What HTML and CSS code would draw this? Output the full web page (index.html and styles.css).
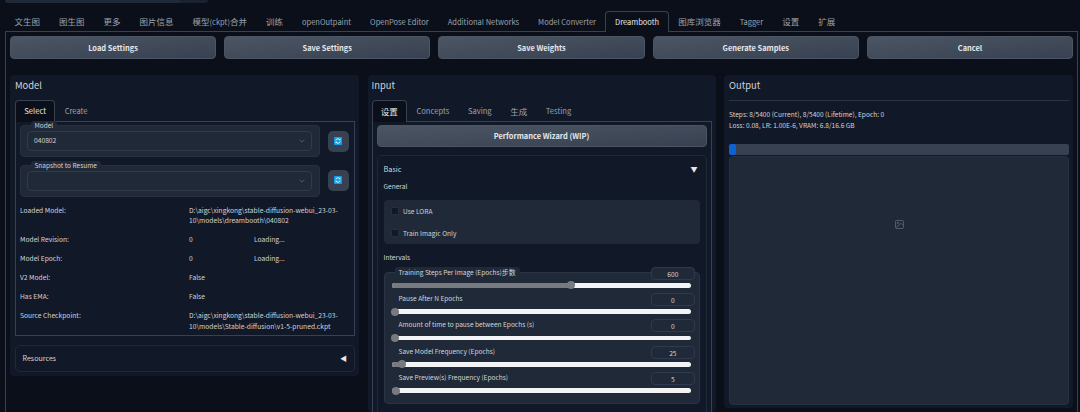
FILE: index.html
```html
<!DOCTYPE html>
<html lang="zh">
<head>
<meta charset="utf-8">
<title>Dreambooth</title>
<link rel="stylesheet" href="styles.css">
</head>
<body>
<div class="remnant"><div class="remnant-main"></div></div>
<nav class="tabs">
  <span class="tab cjk">文生图</span><span class="tab cjk">图生图</span><span class="tab cjk">更多</span><span class="tab cjk">图片信息</span><span class="tab"><span class="cjk">模型</span>(ckpt)<span class="cjk">合并</span></span><span class="tab cjk">训练</span><span class="tab">openOutpaint</span><span class="tab">OpenPose Editor</span><span class="tab">Additional Networks</span><span class="tab">Model Converter</span><span class="tab active">Dreambooth</span><span class="tab cjk">图库浏览器</span><span class="tab">Tagger</span><span class="tab cjk">设置</span><span class="tab cjk">扩展</span>
</nav>
<main class="content">
  <div class="actions">
    <button class="btn">Load Settings</button>
    <button class="btn">Save Settings</button>
    <button class="btn">Save Weights</button>
    <button class="btn">Generate Samples</button>
    <button class="btn">Cancel</button>
  </div>
  <div class="columns">
    <section class="panel">
      <h2 class="panel-title">Model</h2>
      <div class="subtabs">
        <span class="subtab active">Select</span><span class="subtab">Create</span>
      </div>
      <div class="subpanel">
        <div class="pick-row">
          <div class="group">
            <span class="legend">Model</span>
            <div class="select"><span>040802</span><svg class="chev" viewBox="0 0 10 6"><path d="M1 1l4 4 4-4"/></svg></div>
          </div>
          <button class="refresh"><svg viewBox="0 0 8 8"><rect width="8" height="8" rx=".8" fill="#129ee6"/><path d="M1.8 3.4A2.3 2.3 0 0 1 5.8 2.6M6.2 4.6A2.3 2.3 0 0 1 2.2 5.4" fill="none" stroke="#fff" stroke-width=".9"/><path d="M6.4 1.4v1.9H4.6zM1.6 6.6V4.7h1.8z" fill="#fff"/></svg></button>
        </div>
        <div class="pick-row second">
          <div class="group">
            <span class="legend">Snapshot to Resume</span>
            <div class="select"><span></span><svg class="chev" viewBox="0 0 10 6"><path d="M1 1l4 4 4-4"/></svg></div>
          </div>
          <button class="refresh"><svg viewBox="0 0 8 8"><rect width="8" height="8" rx=".8" fill="#129ee6"/><path d="M1.8 3.4A2.3 2.3 0 0 1 5.8 2.6M6.2 4.6A2.3 2.3 0 0 1 2.2 5.4" fill="none" stroke="#fff" stroke-width=".9"/><path d="M6.4 1.4v1.9H4.6zM1.6 6.6V4.7h1.8z" fill="#fff"/></svg></button>
        </div>
        <div class="info">
          <span>Loaded Model:</span><span class="wide">D:\aigc\xingkong\stable-diffusion-webui_23-03-<br>10\models\dreambooth\040802</span>
          <span>Model Revision:</span><span>0</span><span>Loading...</span>
          <span>Model Epoch:</span><span>0</span><span>Loading...</span>
          <span>V2 Model:</span><span class="wide">False</span>
          <span>Has EMA:</span><span class="wide">False</span>
          <span>Source Checkpoint:</span><span class="wide">D:\aigc\xingkong\stable-diffusion-webui_23-03-<br>10\models\Stable-diffusion\v1-5-pruned.ckpt</span>
        </div>
      </div>
      <div class="accordion"><span>Resources</span><span class="tri">◀</span></div>
    </section>

    <section class="panel panel-input">
      <h2 class="panel-title">Input</h2>
      <div class="subtabs">
        <span class="subtab active cjk">设置</span><span class="subtab">Concepts</span><span class="subtab">Saving</span><span class="subtab cjk">生成</span><span class="subtab">Testing</span>
      </div>
      <div class="subpanel input-body">
        <button class="btn wizard">Performance Wizard (WIP)</button>
        <div class="basic">
          <div class="basic-head"><span>Basic</span><span class="tri">▼</span></div>
          <div class="heading general">General</div>
          <div class="checks">
            <label class="check"><i class="box"></i>Use LORA</label>
            <label class="check"><i class="box"></i>Train Imagic Only</label>
          </div>
          <div class="heading intervals">Intervals</div>
          <div class="sliders">
            <div class="slider">
              <div class="slider-top"><span class="pill">Training Steps Per Image (Epochs)<span class="pill-cjk">步数</span></span><span class="num">600</span></div>
              <div class="track"><div class="fill" style="width:60%"></div></div>
            </div>
            <div class="slider">
              <div class="slider-top"><span class="pill">Pause After N Epochs</span><span class="num">0</span></div>
              <div class="track"><div class="fill" style="width:1.2%"></div></div>
            </div>
            <div class="slider">
              <div class="slider-top"><span class="pill">Amount of time to pause between Epochs (s)</span><span class="num">0</span></div>
              <div class="track"><div class="fill" style="width:1.2%"></div></div>
            </div>
            <div class="slider">
              <div class="slider-top"><span class="pill">Save Model Frequency (Epochs)</span><span class="num">25</span></div>
              <div class="track"><div class="fill" style="width:3.6%"></div></div>
            </div>
            <div class="slider">
              <div class="slider-top"><span class="pill">Save Preview(s) Frequency (Epochs)</span><span class="num">5</span></div>
              <div class="track"><div class="fill" style="width:1.6%"></div></div>
            </div>
          </div>
        </div>
      </div>
    </section>

    <section class="panel panel-output">
      <h2 class="panel-title">Output</h2>
      <div class="rule"></div>
      <p class="status">Steps: 8/5400 (Current), 8/5400 (Lifetime), Epoch: 0<br>Loss: 0.08, LR: 1.00E-6, VRAM: 6.8/16.6 GB</p>
      <div class="progress"><div class="progress-fill" style="width:2.2%"></div></div>
      <div class="image-box">
        <svg class="img-icon" viewBox="0 0 10 10"><rect x=".6" y=".6" width="8.8" height="8.8" rx="1"/><circle cx="3.2" cy="3.2" r=".8"/><path d="M1 8.5 6.8 3.6 9.2 6"/></svg>
      </div>
    </section>
  </div>
</main>
</body>
</html>
```

FILE: styles.css
```css
* { box-sizing: border-box; }
html, body { margin: 0; height: 412px; overflow: hidden; background: #0b0f19; }
body {
  font-family: "Noto Sans CJK SC", "Noto Sans", sans-serif;
  font-size: 6.7px;
  line-height: 10.5px;
  color: #d1d5db;
}
.cjk { font-size: 8.5px; }
.remnant { height: 3px; width: 203px; margin-left: 5px; background: #1a2230; border-radius: 0 0 3px 3px; }
.remnant-main { height: 3px; width: 176px; background: #1f2937; border-radius: 0 0 3px 3px; }

.tabs { display: flex; height: 20px; margin: 8px 0 0 5px; position: relative; z-index: 1; font-size: 7.5px; }
.tab {
  padding: 0 8.5px;
  line-height: 19px;
  color: #9ca3af;
  white-space: nowrap;
  border: 1px solid transparent;
  border-bottom: 0;
}
.tab.active {
  color: #e5e7eb;
  border-color: #374151;
  border-radius: 4px 4px 0 0;
  background: #0b0f19;
  height: 21px;
}

.content { border: 1px solid #374151; border-bottom: 0; margin: 0 2px 0 5px; padding: 4px 4px 0; height: 381px; overflow: hidden; }
.actions { display: flex; gap: 8.2px; }
.btn {
  flex: 1;
  height: 22.5px;
  border: 1px solid #4b5563;
  border-radius: 4px;
  background: linear-gradient(to bottom right, #4b5563, #374151);
  color: #e5e7eb;
  font: 600 7.45px/1 "Noto Sans CJK SC", "Noto Sans", sans-serif;
}

.columns { display: flex; gap: 8.5px; margin-top: 16.5px; align-items: flex-start; }
.panel { flex: 1; min-width: 0; background: #111827; border-radius: 4px; padding: 0 4px 4px 5px; }
.panel-input { padding-left: 4px; height: 337px; overflow: hidden; }
.panel-output { padding-left: 5px; height: 333px; }
.panel-title { margin: 0; height: 25px; font-size: 9.4px; font-weight: 400; line-height: 20px; color: #d1d5db; }

.subtabs { display: flex; height: 20.7px; font-size: 7.6px; }
.subtab { padding: 0 8.3px; line-height: 20px; color: #9ca3af; border: 1px solid transparent; border-bottom: 0; white-space: nowrap; }
.subtab.active { color: #e5e7eb; background: #0b0f19; border-color: #374151; border-radius: 4px 4px 0 0; height: 21.7px; position: relative; }
.subpanel { border: 1px solid #374151; padding: 3.3px 4px 4px; }

.pick-row { display: flex; align-items: flex-start; gap: 8px; padding-right: 1px; }
.pick-row.second { margin-top: 8.3px; }
.group { position: relative; width: 300.5px; height: 31.7px; padding: 4.7px 7px; background: #1f2937; border: 1px solid #263041; border-radius: 4px; }
.legend { position: absolute; left: 9.5px; top: -5px; padding: 0 4px; height: 10px; line-height: 9.5px; font-size: 6.5px; color: #d1d5db; background: #1f2937; border-radius: 3px; }
.select { display: flex; align-items: center; justify-content: space-between; height: 20px; padding: 0 6px; margin: 0 0 0 -1px; border: 1px solid #2f3a4c; border-radius: 4px; background: #1f2937; font-size: 6.7px; color: #d1d5db; }
.chev { width: 6px; height: 4px; fill: none; stroke: #6b7280; stroke-width: 1.2; }
.refresh { display: flex; align-items: center; justify-content: center; width: 21.5px; height: 21px; margin-top: 6px; padding: 0; border: 0; border-radius: 5px; background: #374151; }
.refresh svg { width: 8px; height: 8px; }
.second .refresh { margin-top: 5px; }

.info { display: grid; grid-template-columns: 169px 65px 1fr; row-gap: 8.5px; margin-top: 8px; font-size: 6.7px; color: #d1d5db; }
.info .wide { grid-column: 2 / 4; }

.accordion { display: flex; justify-content: space-between; align-items: center; height: 27px; margin-top: 8.5px; padding: 0 7px 0 6.5px; border: 1px solid #1f2937; border-radius: 5px; font-size: 7.1px; color: #d1d5db; }
.tri { font-size: 7px; color: #e5e7eb; }

.input-body { height: 400px; }
.wizard { display: block; width: 100%; height: 21.7px; }
.basic { margin-top: 8.3px; padding: 0 6px 20px; border: 1px solid #1f2937; border-radius: 5px; }
.basic-head { display: flex; justify-content: space-between; align-items: center; height: 26px; font-size: 7.3px; padding-right: 2px; }
.heading { font-size: 6.6px; color: #d1d5db; }
.general { margin-top: -0.75px; }
.checks { display: flex; flex-direction: column; height: 44px; margin-top: 8.25px; padding: 6px 7.5px; gap: 11.5px; background: #1f2937; border-radius: 4px; }
.check { display: flex; align-items: center; gap: 4px; height: 10.5px; font-size: 6.6px; color: #d1d5db; }
.box { width: 8px; height: 8px; border-radius: 1.5px; background: #111827; border: 1px solid #253043; }
.intervals { margin-top: 8.25px; }
.sliders { margin-top: 9px; padding: 0 7.5px 0 7px; height: 131.8px; background: #1f2937; border: 1px solid #2a3444; border-radius: 4px; }
.slider { height: 26.3px; }
.slider-top { display: flex; justify-content: space-between; height: 15px; padding-left: 3px; position: relative; top: -6px; }
.pill { height: 12px; padding: 0 4px; line-height: 11px; font-size: 6.55px; background: #1f2937; border-radius: 3px; color: #d1d5db; }
.pill-cjk { font-size: 6.9px; }
.num { width: 44.7px; height: 13px; margin-right: -4.2px; border: 1px solid #2f3a4c; border-radius: 4px; background: #1f2937; font-size: 6.7px; line-height: 12px; text-align: center; color: #d1d5db; }
.track { height: 4.5px; margin-top: -4.6px; border-radius: 3px; background: #f3f4f6; }
.fill { position: relative; height: 100%; border-radius: 3px 0 0 3px; background: #777b80; }
.fill::after { content: ""; position: absolute; right: -4px; top: -1.75px; width: 8px; height: 8px; border-radius: 50%; background: #777b80; }

.rule { height: 1px; margin: 0 0 -1px; background: #2b3445; }
.status { margin: 9px 0 0; font-size: 6.6px; color: #d1d5db; height: 35px; }
.progress { height: 11px; background: #374151; border-radius: 2px; overflow: hidden; }
.progress-fill { height: 100%; background: #0b62d6; border-radius: 2px; }
.image-box { display: flex; justify-content: center; align-items: flex-start; padding-top: 63px; height: 249px; margin-top: 1px; background: #1f2937; border: 1px solid #263041; border-radius: 4px; }
.img-icon { width: 9px; height: 9px; fill: none; stroke: #6b7280; stroke-width: .8; }
```
